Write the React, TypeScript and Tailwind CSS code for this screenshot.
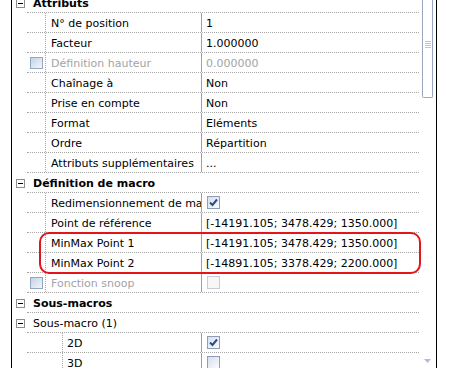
const line = "border-[#a5a5a5]";

type PropRow = {
  label: string;
  value?: string;
  check?: "on" | "off" | "dim";
  leftBox?: boolean;
  disabled?: boolean;
  deep?: boolean;
};

const MinusBox = () => (
  <div className="w-[9px] h-[9px] border border-[#8e8e8e] bg-white flex items-center justify-center">
    <div className="w-[5px] h-px bg-black" />
  </div>
);

const Check = ({ state }: { state: "on" | "off" | "dim" }) => {
  if (state === "dim")
    return <div className="w-[13px] h-[13px] border border-[#c9cdd3] bg-[#f7f7f7]" />;
  return (
    <div className="w-[13px] h-[13px] border border-[#8d9db5] bg-gradient-to-br from-[#d6dfec] to-[#fbfcfe] flex items-center justify-center">
      {state === "on" && (
        <svg width="11" height="11" viewBox="0 0 11 11">
          <path d="M2 5.5 L4.5 8 L9 2.5" fill="none" stroke="#254f8e" strokeWidth="2" />
        </svg>
      )}
    </div>
  );
};

const Header = ({ label, bold = true }: { label: string; bold?: boolean }) => (
  <div className="flex h-[20px]">
    <div className="w-[15px] shrink-0 flex items-center pl-[4px]">
      <MinusBox />
    </div>
    <div
      className={`flex-1 flex items-center pt-[3px] pl-[6px] border-b border-dotted ${line} ${
        bold ? "font-bold" : ""
      }`}
    >
      {label}
    </div>
  </div>
);

const Prop = ({ label, value, check, leftBox, disabled, deep }: PropRow) => (
  <div className="flex h-[20px]">
    <div className="w-[15px] shrink-0" />
    <div className={`flex-1 flex border-b border-dotted ${line}`}>
      <div className={`${deep ? "w-[35px]" : "w-[18px]"} shrink-0 flex items-center pl-[3px]`}>
        {leftBox && (
          <div className="w-[13px] h-[12px] border border-[#95a6bf] bg-gradient-to-br from-[#c3d1e6] to-[#f4f7fb]" />
        )}
      </div>
      <div
        className={`${deep ? "w-[139px] pl-[4px]" : "w-[156px] pl-[5px]"} shrink-0 flex items-center pt-[3px] border-l border-dotted ${line} overflow-hidden whitespace-nowrap ${
          disabled ? "text-[#a3a3a3]" : "text-black"
        }`}
      >
        {label}
      </div>
      <div className="w-px shrink-0 bg-[#a0a0a0]" />
      <div
        className={`flex-1 flex items-center whitespace-nowrap ${check ? "pl-[5px]" : "pl-[4px] pt-[3px]"} ${
          disabled ? "text-[#a3a3a3]" : "text-black"
        }`}
      >
        {check ? <Check state={check} /> : value}
      </div>
    </div>
  </div>
);

export default function App() {
  return (
    <div className="relative w-[464px] h-[368px] bg-white overflow-hidden text-[11px] font-['DejaVu_Sans',sans-serif]">
      <div className="ml-[11px] w-[426px] h-full border-x border-black flex">
        {/* rows */}
        <div className="w-[407px] shrink-0 -mt-[7px]">
          <Header label="Attributs" />
          <Prop label="N° de position" value="1" />
          <Prop label="Facteur" value="1.000000" />
          <Prop label="Définition hauteur" value="0.000000" leftBox disabled />
          <Prop label="Chaînage à" value="Non" />
          <Prop label="Prise en compte" value="Non" />
          <Prop label="Format" value="Eléments" />
          <Prop label="Ordre" value="Répartition" />
          <Prop label="Attributs supplémentaires" value="..." />
          <Header label="Définition de macro" />
          <Prop label="Redimensionnement de macro" check="on" />
          <Prop label="Point de référence" value="[-14191.105; 3478.429; 1350.000]" />
          <Prop label="MinMax Point 1" value="[-14191.105; 3478.429; 1350.000]" />
          <Prop label="MinMax Point 2" value="[-14891.105; 3378.429; 2200.000]" />
          <Prop label="Fonction snoop" check="dim" leftBox disabled />
          <Header label="Sous-macros" />
          <Header label="Sous-macro (1)" bold={false} />
          <Prop label="2D" check="on" deep />
          <Prop label="3D" check="off" deep />
        </div>

        {/* scrollbar */}
        <div className="w-[11px] ml-[3px] shrink-0 flex flex-col">
          <div className="h-[98px] border-x border-b border-[#9aa8bf] rounded-b-[2px] bg-white flex flex-col items-center pt-[41px] gap-px">
            <div className="w-[6px] h-px bg-[#b9c5d8]" />
            <div className="w-[6px] h-px bg-[#b9c5d8]" />
            <div className="w-[6px] h-px bg-[#b9c5d8]" />
            <div className="w-[6px] h-px bg-[#b9c5d8]" />
          </div>
          <div className="mt-auto mb-[5px] flex justify-center">
            <svg width="7" height="4" viewBox="0 0 7 4">
              <path d="M0 0 H7 L3.5 4 Z" fill="#a9bedb" />
            </svg>
          </div>
        </div>
      </div>

      {/* highlight */}
      <div className="absolute left-[39px] top-[232px] w-[382px] h-[42px] border-2 border-[#e5141b] rounded-[10px]" />
    </div>
  );
}
